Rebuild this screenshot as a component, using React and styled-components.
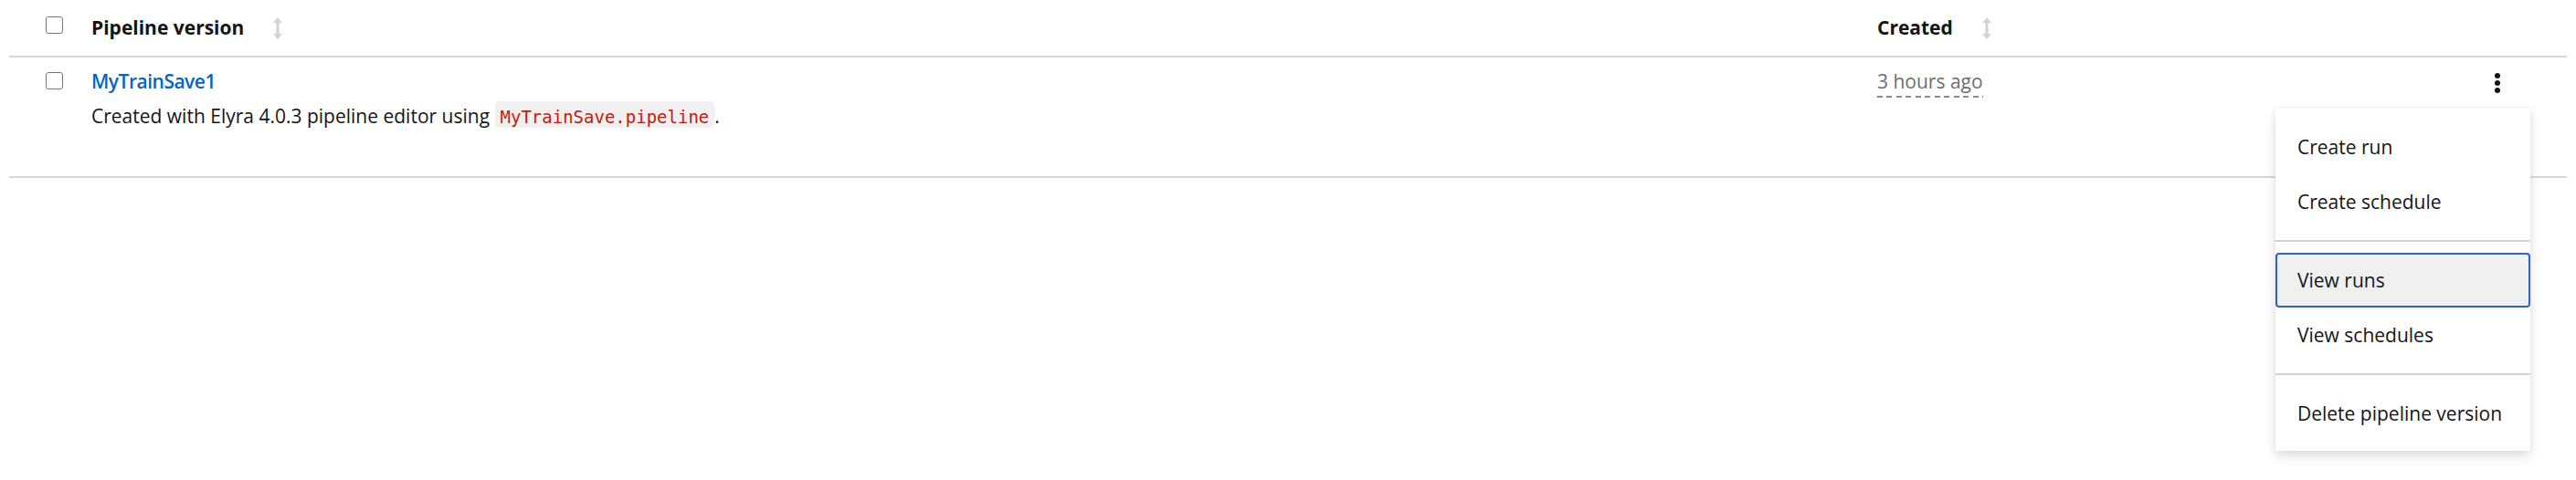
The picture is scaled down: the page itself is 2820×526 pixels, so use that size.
import styled, { createGlobalStyle } from "styled-components";

const GlobalStyle = createGlobalStyle`
  body {
    margin: 0;
    background: #fff;
    color: #151515;
    font-family: "Open Sans", "Noto Sans", sans-serif;
    font-size: 21px;
  }
`;

const Page = styled.div`
  min-height: 526px;
  padding: 0 10px;
`;

const Row = styled.div`
  display: grid;
  grid-template-columns: 90px 1fr 643px 112px;
  align-items: ${(p) => (p.$head ? "center" : "start")};
  height: ${(p) => (p.$head ? "61px" : "130px")};
  border-bottom: 2px solid #d8d8d8;
`;

const CheckCell = styled.div`
  align-self: start;
  padding: ${(p) => (p.$head ? "18px" : "16px")} 0 0 40px;
`;

const Checkbox = styled.span`
  display: block;
  width: 19px;
  height: 19px;
  box-sizing: border-box;
  border: 1.5px solid #767676;
  border-radius: 3px;
  background: #fff;
`;

const HeadCell = styled.div`
  display: flex;
  align-items: center;
  gap: 32px;
  font-weight: 700;
  line-height: 31.5px;
`;

const Cell = styled.div`
  position: relative;
  padding-top: ${(p) => p.$top || "11px"};
  padding-left: ${(p) => p.$left || "0"};
  line-height: 31.5px;
`;

const Title = styled.a`
  display: block;
  color: #0066cc;
  font-weight: 600;
  letter-spacing: -0.5px;
  text-decoration: none;
`;

const Desc = styled.div`
  margin-top: 5px;
`;

const Code = styled.code`
  display: inline-block;
  font-family: "DejaVu Sans Mono", "Liberation Mono", monospace;
  font-size: 19px;
  line-height: 22px;
  padding: 6px 6px 1px;
  color: #c9190b;
  background: #f0f0f0;
  border-radius: 5px;
`;

const Ago = styled.span`
  display: inline-block;
  color: #6a6e73;
  padding-bottom: 1px;
  background-image: repeating-linear-gradient(
    90deg,
    #8a8d90 0 6px,
    transparent 6px 10.5px
  );
  background-size: 100% 2px;
  background-position: left bottom;
  background-repeat: no-repeat;
`;

const Menu = styled.div`
  position: absolute;
  top: 56px;
  right: 40px;
  width: 279px;
  padding: 12px 0 11px;
  background: #fff;
  box-shadow: 0 6px 12px rgba(3, 3, 3, 0.12), 0 0 6px rgba(3, 3, 3, 0.06);
  z-index: 10;
`;

const MenuItem = styled.div`
  box-sizing: border-box;
  height: 60px;
  padding: ${(p) => (p.$focus ? "10px 22px" : "12px 24px")};
  line-height: 36px;
  white-space: nowrap;
  color: #151515;
  background: ${(p) => (p.$focus ? "#f0f0f0" : "transparent")};
  border: ${(p) => (p.$focus ? "2px solid #2b63cc" : "none")};
  border-radius: 4px;
`;

const Divider = styled.div`
  height: 2px;
  margin: 12px 0;
  background: #d2d2d2;
`;

function SortIcon() {
  return (
    <svg width="10" height="24" viewBox="0 0 10 24" fill="#d2d2d2">
      <path d="M5 0 L10 6 L6.5 6 L6.5 18 L10 18 L5 24 L0 18 L3.5 18 L3.5 6 L0 6 Z" />
    </svg>
  );
}

function KebabIcon() {
  return (
    <svg width="6" height="22" viewBox="0 0 6 22" fill="#151515">
      <circle cx="3" cy="3" r="3" />
      <circle cx="3" cy="11" r="3" />
      <circle cx="3" cy="19" r="3" />
    </svg>
  );
}

export default function App() {
  return (
    <Page>
      <GlobalStyle />
      <Row $head>
        <CheckCell $head>
          <Checkbox />
        </CheckCell>
        <HeadCell>
          Pipeline version
          <SortIcon />
        </HeadCell>
        <HeadCell>
          Created
          <SortIcon />
        </HeadCell>
        <div />
      </Row>
      <Row>
        <CheckCell>
          <Checkbox />
        </CheckCell>
        <Cell>
          <Title href="#">MyTrainSave1</Title>
          <Desc>
            Created with Elyra 4.0.3 pipeline editor using{" "}
            <Code>MyTrainSave.pipeline</Code>.
          </Desc>
        </Cell>
        <Cell>
          <Ago>3 hours ago</Ago>
        </Cell>
        <Cell $top="16px" $left="33px">
          <KebabIcon />
          <Menu>
            <MenuItem>Create run</MenuItem>
            <MenuItem>Create schedule</MenuItem>
            <Divider />
            <MenuItem $focus>View runs</MenuItem>
            <MenuItem>View schedules</MenuItem>
            <Divider />
            <MenuItem>Delete pipeline version</MenuItem>
          </Menu>
        </Cell>
      </Row>
    </Page>
  );
}
